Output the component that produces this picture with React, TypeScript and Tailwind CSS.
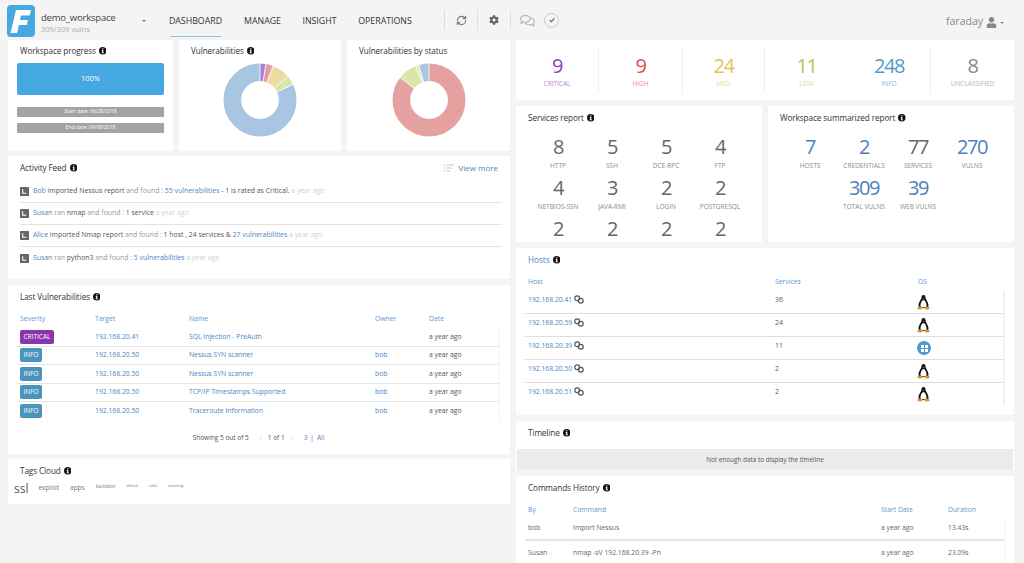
import React from "react";
import { FaCog, FaRegComments, FaUser } from "react-icons/fa";
import { RefreshCw } from "lucide-react";

const Info = () => (
  <svg viewBox="0 0 10 10" className="inline-block w-[7.5px] h-[7.5px] ml-[3px] align-[-0.5px]">
    <circle cx="5" cy="5" r="5" fill="#111" />
    <rect x="4.2" y="1.7" width="1.6" height="1.5" fill="#fff" />
    <path d="M3.6 4h2.2v3.4h.7v1h-3v-1h.8V5h-.7z" fill="#fff" />
  </svg>
);

const Title = ({ children, info = true, className = "" }: { children: React.ReactNode; info?: boolean; className?: string }) => (
  <div className={`text-[8.2px] leading-[12px] text-[#333] tracking-[-0.1px] ${className}`}>
    {children}
    {info && <Info />}
  </div>
);

const Donut = ({ slices }: { slices: [number, string][] }) => {
  const r = 27.7;
  const c = 2 * Math.PI * r;
  let acc = 0;
  let a = 0;
  return (
    <svg viewBox="0 0 80 80" className="w-[80px] h-[80px]">
      <g transform="rotate(-90 40 40)">
        {slices.map(([v, col], i) => {
          const dash = (v / 100) * c;
          const el = (
            <circle key={i} cx="40" cy="40" r={r} fill="none" stroke={col} strokeWidth="17.6" strokeDasharray={`${dash} ${c - dash}`} strokeDashoffset={-acc} />
          );
          acc += dash;
          return el;
        })}
        {slices.map(([v], i) => {
          const ang = (a / 100) * 2 * Math.PI;
          a += v;
          return (
            <line key={i} x1={40 + 19 * Math.cos(ang)} y1={40 + 19 * Math.sin(ang)} x2={40 + 37 * Math.cos(ang)} y2={40 + 37 * Math.sin(ang)} stroke="#fff" strokeWidth="0.8" />
          );
        })}
      </g>
    </svg>
  );
};

const FeedIcon = () => (
  <svg viewBox="0 0 10 10" className="w-[9px] h-[9px] shrink-0">
    <rect width="10" height="10" rx="0.6" fill="#666" />
    <path d="M3 2.5v4.5h4" fill="none" stroke="#fff" strokeWidth="1.2" />
  </svg>
);

const Link = ({ children }: { children: React.ReactNode }) => <span className="text-[#4a86c5]">{children}</span>;
const Mute = ({ children }: { children: React.ReactNode }) => <span className="text-[#999]">{children}</span>;
const Ago = () => <span className="text-[#d0d0d0]"> a year ago</span>;

const feed: React.ReactNode[] = [
  <><Link>Bob</Link> imported Nessus report <Mute>and found :</Mute> <Link>55 vulnerabilities</Link> - 1 is rated as Critical.<Ago /></>,
  <><Link>Susan</Link> <Mute>ran</Mute> nmap <Mute>and found :</Mute> 1 service<Ago /></>,
  <><Link>Alice</Link> imported Nmap report <Mute>and found :</Mute> 1 host , 24 services &amp; <Link>27 vulnerabilities</Link><Ago /></>,
  <><Link>Susan</Link> <Mute>ran</Mute> python3 <Mute>and found :</Mute> <Link>5 vulnerabilities</Link><Ago /></>,
];

const vulns = [
  ["CRITICAL", "192.168.20.41", "SQL Injection - PreAuth", ""],
  ["INFO", "192.168.20.50", "Nessus SYN scanner", "bob"],
  ["INFO", "192.168.20.50", "Nessus SYN scanner", "bob"],
  ["INFO", "192.168.20.50", "TCP/IP Timestamps Supported", "bob"],
  ["INFO", "192.168.20.50", "Traceroute Information", "bob"],
];

const counts: [string, string, string, string, boolean][] = [
  ["9", "CRITICAL", "text-[#8e3fc4]", "text-[#b583d8]", true],
  ["9", "HIGH", "text-[#df4f4f]", "text-[#e88a8a]", true],
  ["24", "MED", "text-[#e2c15f]", "text-[#ecd694]", true],
  ["11", "LOW", "text-[#a9cf4f]", "text-[#c6df8c]", false],
  ["248", "INFO", "text-[#4f9bc9]", "text-[#87bbdb]", true],
  ["8", "UNCLASSIFIED", "text-[#888]", "text-[#b5b5b5]", false],
];

const Stat = ({ n, l, blue = false }: { n: string; l: string; blue?: boolean }) => (
  <div className="flex flex-col items-center h-[41px]">
    <div className={`text-[20px] leading-[28px] tracking-[-1.5px] ${blue ? "text-[#4a82be]" : "text-[#666]"}`}>{n}</div>
    <div className="text-[6.5px] leading-[10px] text-[#8a8a8a] whitespace-nowrap">{l}</div>
  </div>
);

const Chain = () => (
  <svg viewBox="0 0 10 9" className="inline-block w-[10px] h-[9px] ml-[2px] align-[-2px]" fill="none" stroke="#555" strokeWidth="1.2">
    <circle cx="3.2" cy="3.2" r="2.4" />
    <circle cx="6.8" cy="5.8" r="2.4" />
  </svg>
);

const Penguin = () => (
  <svg viewBox="0 0 13 15" className="w-[13px] h-[15px]">
    <path d="M6.500 0C5 0 4.500 1.200 4.500 2.600 4.500 4.500 1.500 7.500 1.500 10.500 1.500 12 2.500 13 4 13H9C10.500 13 11.500 12 11.500 10.500 11.500 7.500 8.500 4.500 8.500 2.600 8.500 1.200 8 0 6.500 0z" fill="#111" />
    <path d="M6.500 5C5.200 5 3.500 8 3.500 10.200 3.500 11.500 4.300 12.300 5.200 12.300H7.800C8.700 12.300 9.500 11.500 9.500 10.200 9.500 8 7.800 5 6.500 5z" fill="#fff" />
    <path d="M5.600 3h1.800l-.9 1z" fill="#e8a33d" />
    <ellipse cx="3" cy="13" rx="2.700" ry="1.500" fill="#d9962f" />
    <ellipse cx="10" cy="13" rx="2.700" ry="1.500" fill="#d9962f" />
  </svg>
);

const Win = () => (
  <span className="flex items-center justify-center w-[14px] h-[14px] rounded-full bg-[#4a9ed0]">
    <span className="grid grid-cols-2 gap-[1px] w-[7px] h-[7px]">
      <span className="bg-white" /><span className="bg-white" /><span className="bg-white" /><span className="bg-white" />
    </span>
  </span>
);

const hosts: [string, string, boolean][] = [
  ["192.168.20.41", "36", false],
  ["192.168.20.59", "24", false],
  ["192.168.20.39", "11", true],
  ["192.168.20.50", "2", false],
  ["192.168.20.51", "2", false],
];

const Card = ({ className = "", children }: { className?: string; children: React.ReactNode }) => (
  <div className={`bg-white overflow-hidden ${className}`}>{children}</div>
);

export default function App() {
  return (
    <div className="w-[1024px] h-[563px] overflow-hidden bg-[#f4f4f4] text-[#444]" style={{ fontFamily: '"Open Sans", sans-serif' }}>
      <header className="h-[40px] flex items-center relative">
        <div className="ml-[7px] w-[28px] h-[32px] rounded-[4px] bg-[#46a8e0] flex items-center justify-center shrink-0 mt-[1px]">
          <svg viewBox="0 0 28 32" className="w-[28px] h-[32px]">
            <path d="M9 5h15l-1.400 5.500H14l-1 4.500h8l-1.300 5H12l-2 8H3.500z" fill="#fff" />
          </svg>
        </div>
        <div className="ml-[6px] w-[101px] shrink-0 mt-[5px]">
          <div className="text-[9.500px] leading-[13px] text-[#444] tracking-[-0.2px]">demo_workspace</div>
          <div className="text-[7.500px] leading-[10px] text-[#aaa]">309/309 vulns</div>
        </div>
        <span className="w-0 h-0 border-x-[2px] border-x-transparent border-t-[2px] border-t-[#777] shrink-0 mt-[2px]" />
        <nav className="ml-[24px] flex h-[37px] self-start items-stretch text-[8.800px] text-[#333]">
          <span className="w-[51px] flex items-center justify-center border-b border-[#8cc4e8] pt-[7px] whitespace-nowrap">DASHBOARD</span>
          <span className="ml-[24px] w-[35px] flex items-center justify-center pt-[7px]">MANAGE</span>
          <span className="ml-[23px] w-[33px] flex items-center justify-center pt-[7px]">INSIGHT</span>
          <span className="ml-[23px] w-[52px] flex items-center justify-center pt-[7px]">OPERATIONS</span>
        </nav>
        <div className="ml-[33px] h-[20px] border-l border-[#ddd] w-[33px] flex items-center justify-center">
          <RefreshCw size={11} color="#777" strokeWidth={2.4} />
        </div>
        <div className="h-[20px] border-l border-[#ddd] w-[33px] flex items-center justify-center">
          <FaCog size={10} color="#666" />
        </div>
        <div className="h-[20px] border-l border-[#ddd] w-[33px] flex items-center justify-center">
          <FaRegComments size={15} color="#bbb" />
        </div>
        <div className="ml-[1px] w-[15px] h-[15px] rounded-full border border-[#ccc] flex items-center justify-center">
          <svg viewBox="0 0 10 10" className="w-[8px] h-[8px]"><path d="M2 5.200l2.100 2L8 3" fill="none" stroke="#666" strokeWidth="1.500" /></svg>
        </div>
        <div className="ml-auto mr-[20px] flex items-center text-[10.500px] text-[#888] mt-[4px]">
          faraday
          <FaUser size={11} color="#888" className="ml-[3px]" />
          <span className="ml-[3px] mt-[1px] w-0 h-0 border-x-[2px] border-x-transparent border-t-[2px] border-t-[#888]" />
        </div>
      </header>

      <div className="flex">
        <div className="ml-[8px] w-[502px] flex flex-col shrink-0">
          <div className="flex gap-[6px]">
            <Card className="w-[165px] h-[111px] px-[9px] pt-[5px]">
              <Title className="ml-[3px]">Workspace progress</Title>
              <div className="mt-[6px] h-[32px] rounded-[2px] bg-[#46a8e0] text-white text-[7.500px] flex items-center justify-center">100%</div>
              <div className="mt-[12px] h-[10px] rounded-[1px] bg-[#a3a3a3] text-white text-[5px] flex items-center justify-center">Start date: 06/28/2018</div>
              <div className="mt-[6px] h-[10px] rounded-[1px] bg-[#a3a3a3] text-white text-[5px] flex items-center justify-center">End date: 09/08/2018</div>
            </Card>
            <Card className="w-[162px] h-[111px] pt-[5px]">
              <Title className="ml-[12px]">Vulnerabilities</Title>
              <div className="flex justify-center mt-[3px]">
                <Donut slices={[[2.6, "#ac7ed8"], [3.2, "#e39c9c"], [8.1, "#ecdca4"], [4.1, "#d8e6a8"], [82, "#a8c5e2"]]} />
              </div>
            </Card>
            <Card className="w-[163px] h-[111px] pt-[5px]">
              <Title className="ml-[12px]" info={false}>Vulnerabilities by status</Title>
              <div className="flex justify-center mt-[3px]">
                <Donut slices={[[85.5, "#e5a0a0"], [8.5, "#d8e6a8"], [1.4, "#f0e4b0"], [4.6, "#a8c5e2"]]} />
              </div>
            </Card>
          </div>

          <Card className="mt-[5px] h-[123px] pl-[12px] pr-[10px] pt-[6px]">
            <div className="flex items-center justify-between h-[12px]">
              <Title>Activity Feed</Title>
              <div className="flex items-center text-[8px] text-[#4a86c5] mr-[2px]">
                <svg viewBox="0 0 10 8" className="w-[10px] h-[8px] mr-[4px]" stroke="#aaa" strokeWidth="0.7">
                  <path d="M0 1h1M2.500 1H10M0 4h1M2.500 4H8M0 7h1M2.500 7H6" />
                </svg>
                View more
              </div>
            </div>
            <div className="mt-[7px] -mr-[2px]">
              {feed.map((row, i) => (
                <div key={i} className={`h-[22px] flex items-center gap-[4px] text-[6.900px] text-[#555] ${i < 3 ? "border-b border-[#e4e4e4]" : ""}`}>
                  <FeedIcon />
                  <div className="whitespace-pre-wrap">{row}</div>
                </div>
              ))}
            </div>
          </Card>

          <Card className="mt-[6px] h-[169px] pl-[9px] pr-[10px] pt-[6px]">
            <Title className="ml-[3px]">Last Vulnerabilities</Title>
            <div className="mt-[9px] mb-[2px] grid grid-cols-[75px_94px_186px_54px_1fr] h-[14px] items-center text-[6.800px] text-[#5f97d0] pl-[3px]">
              <span>Severity</span><span>Target</span><span>Name</span><span>Owner</span><span>Date</span>
            </div>
            {vulns.map((v, i) => (
              <div key={i} className={`grid grid-cols-[75px_94px_186px_54px_1fr] items-center h-[18.500px] text-[6.800px] pl-[3px] border-r border-[#f2f2f2] ${i < 4 ? "border-b border-b-[#e6e6e6]" : ""}`}>
                <span>
                  <span className={`inline-block h-[14px] leading-[14px] px-[3.500px] rounded-[2px] text-white text-[6.500px] ${v[0] === "INFO" ? "bg-[#4a93bd]" : "bg-[#8a35b0]"}`}>{v[0]}</span>
                </span>
                <span className="text-[#4a86c5]">{v[1]}</span>
                <span className="text-[#4a86c5]">{v[2]}</span>
                <span className="text-[#4a86c5]">{v[3]}</span>
                <span className="text-[#555]">a year ago</span>
              </div>
            ))}
            <div className="mt-[12px] flex justify-center items-center text-[6.500px] text-[#555]">
              <span>Showing 5 out of 5</span>
              <span className="ml-[11px] text-[#bbb]">&lsaquo;</span>
              <span className="ml-[6px]">1 of 1</span>
              <span className="ml-[6px] text-[#bbb]">&rsaquo;</span>
              <span className="ml-[11px] text-[#4a86c5]">3</span>
              <span className="mx-[3px]">|</span>
              <span className="text-[#4a86c5]">All</span>
            </div>
          </Card>

          <Card className="mt-[5px] h-[45px] pl-[6px] pt-[6px]">
            <Title className="ml-[6px]">Tags Cloud</Title>
            <div className="flex items-start text-[#777] mt-[3px]">
              <span className="text-[12px] leading-[17px] text-[#555]">ssl</span>
              <span className="ml-[10px] mt-[3px] text-[6.500px] leading-[10px]">exploit</span>
              <span className="ml-[11px] mt-[3px] text-[6.500px] leading-[10px]">apps</span>
              <span className="ml-[11px] mt-[2px] text-[4.500px] leading-[8px]">backdoor</span>
              <span className="ml-[11px] mt-[2px] text-[3.500px] leading-[7px]">default</span>
              <span className="ml-[11px] mt-[2px] text-[3.500px] leading-[7px]">ssltls</span>
              <span className="ml-[11px] mt-[2px] text-[3.500px] leading-[7px]">transiting</span>
            </div>
          </Card>
        </div>

        <div className="ml-[6px] w-[498px] flex flex-col shrink-0">
          <Card className="h-[60px] grid grid-cols-[83px_84px_82px_83px_83px_83px] items-center">
            {counts.map(([n, l, c1, c2, div]) => (
              <div key={l} className={`h-[46px] flex flex-col items-center justify-center ${div ? "border-r border-[#eee]" : ""}`}>
                <div className={`text-[20px] leading-[27px] tracking-[-1.5px] ${c1}`}>{n}</div>
                <div className={`text-[6.500px] leading-[10px] ${c2}`}>{l}</div>
              </div>
            ))}
          </Card>

          <div className="mt-[6px] flex gap-[6px]">
            <Card className="w-[246px] h-[136px] pt-[6px] pl-[12px]">
              <Title>Services report</Title>
              <div className="mt-[9px] -ml-[12px] pl-[15px] grid grid-cols-[54px_54px_54px_54px] justify-start">
                {[["8","HTTP"],["5","SSH"],["5","DCE-RPC"],["4","FTP"],["4","NETBIOS-SSN"],["3","JAVA-RMI"],["2","LOGIN"],["2","POSTGRESQL"],["2",""],["2",""],["2",""],["2",""]].map(([n, l], i) => (
                  <Stat key={i} n={n} l={l} />
                ))}
              </div>
            </Card>
            <Card className="w-[246px] h-[136px] pt-[6px] pl-[12px]">
              <Title>Workspace summarized report</Title>
              <div className="mt-[9px] -ml-[12px] pl-[15px] grid grid-cols-[54px_54px_54px_54px] justify-start">
                <Stat n="7" l="HOSTS" blue />
                <Stat n="2" l="CREDENTIALS" blue />
                <Stat n="77" l="SERVICES" />
                <Stat n="270" l="VULNS" blue />
                <span />
                <Stat n="309" l="TOTAL VULNS" blue />
                <Stat n="39" l="WEB VULNS" blue />
              </div>
            </Card>
          </div>

          <Card className="mt-[6px] h-[167px] pl-[9px] pr-[9px] pt-[6px]">
            <div className="ml-[3px] text-[8.200px] leading-[12px] text-[#4a86c5]">Hosts<Info /></div>
            <div className="mt-[9px] mb-[2px] grid grid-cols-[247px_143px_1fr] h-[14px] items-center text-[6.800px] text-[#5f97d0] pl-[3px]">
              <span>Host</span><span>Services</span><span>OS</span>
            </div>
            {hosts.map(([h, s, win], i) => (
              <div key={h} className={`grid grid-cols-[247px_143px_1fr] h-[23px] items-center text-[6.800px] pl-[3px] border-r-2 border-[#f2f2f2] ${i < 4 ? "border-b border-b-[#dedede]" : ""}`}>
                <span className="text-[#4a86c5] whitespace-nowrap -mt-[4px]">{h}<Chain /></span>
                <span className="text-[#555] -mt-[4px]">{s}</span>
                <span className="-ml-[1px]">{win ? <Win /> : <Penguin />}</span>
              </div>
            ))}
          </Card>

          <Card className="mt-[6px] h-[49px] pt-[6px]">
            <Title className="ml-[12px]">Timeline</Title>
            <div className="mt-[10px] mx-[1px] h-[21px] bg-[#ebebeb] text-[6.400px] text-[#555] flex items-center justify-center">
              Not enough data to display the timeline
            </div>
          </Card>

          <Card className="mt-[6px] h-[87px] pl-[9px] pr-[9px] pt-[6px]">
            <Title className="ml-[3px]">Commands History</Title>
            <div className="mt-[9px] grid grid-cols-[45px_308px_67px_1fr] h-[14px] items-center text-[6.800px] text-[#5f97d0] pl-[3px]">
              <span>By</span><span>Command</span><span>Start Date</span><span>Duration</span>
            </div>
            {[["bob", "Import Nessus", "a year ago", "13.43s"], ["Susan", "nmap -sV 192.168.20.39 -Pn", "a year ago", "23.09s"]].map((r, i) => (
              <div key={r[0]} className={`grid grid-cols-[45px_308px_67px_1fr] h-[24px] items-center text-[6.800px] text-[#666] pl-[3px] border-r border-[#f2f2f2] ${i === 0 ? "border-b-2 border-b-[#e6e6e6]" : ""}`}>
                <span>{r[0]}</span><span>{r[1]}</span><span>{r[2]}</span><span>{r[3]}</span>
              </div>
            ))}
          </Card>
        </div>
      </div>
    </div>
  );
}
